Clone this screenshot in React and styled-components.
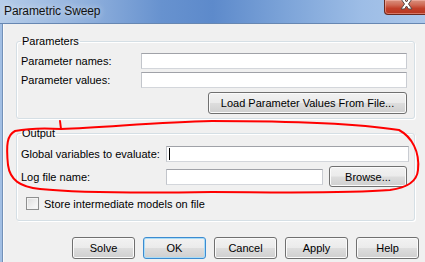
import React from "react";
import styled, { createGlobalStyle } from "styled-components";

const GlobalStyle = createGlobalStyle`
  html, body {
    margin: 0;
    padding: 0;
    background: #f0f0f0;
    overflow: hidden;
  }
  body {
    font-family: "Liberation Sans", Arial, sans-serif;
    font-size: 11px;
    color: #000;
  }
`;

const Window = styled.div`
  position: relative;
  width: 425px;
  height: 262px;
  display: flex;
  flex-direction: column;
  overflow: hidden;
`;

const TitleBar = styled.div`
  flex: none;
  height: 23px;
  display: flex;
  justify-content: space-between;
  padding-left: 4px;
  background: linear-gradient(
    90deg,
    #b6cde9 0%,
    #95b4de 18%,
    #6792cf 38%,
    #5d8acb 50%,
    #7ea5d9 68%,
    #9dbde6 85%,
    #abc7ea 100%
  );
  border-bottom: 1px solid #6787b2;
`;

const Title = styled.span`
  align-self: center;
  margin-top: -2px;
  font-size: 12px;
  letter-spacing: -0.1px;
  color: #111;
  text-shadow: 0 0 6px rgba(255, 255, 255, 0.7);
`;

const CloseButton = styled.div`
  align-self: flex-start;
  width: 44px;
  height: 15px;
  margin-right: -3px;
  display: flex;
  justify-content: center;
  align-items: flex-start;
  box-sizing: border-box;
  border: 1px solid #6b2a1e;
  border-top: none;
  border-radius: 0 0 4px 4px;
  background: linear-gradient(#d9917f 0%, #cf6a55 35%, #c2402a 60%, #b6361f 100%);
  box-shadow: inset 0 0 0 1px rgba(255, 200, 190, 0.45);
`;

const Frame = styled.div`
  flex: 1;
  display: flex;
  border-left: 2px solid #a2bfe4;
`;

const Content = styled.div`
  flex: 1;
  display: flex;
  flex-direction: column;
  background: #f0f0f0;
  border-left: 1px solid #7391b8;
  box-shadow: inset 1px 0 0 #fbfbfb;
  padding: 10px 6px 0 13px;
`;

const Group = styled.fieldset`
  margin: ${(p) => (p.$first ? "0" : "7px")} 4px 0 0;
  padding: 0 7px ${(p) => p.$bottom}px 4px;
  border: 1px solid #d5dfe5;
  border-radius: 3px;
  box-shadow: 1px 1px 0 #fff inset, 1px 1px 0 #fff;
  min-width: 0;
`;

const Legend = styled.legend`
  padding: 0 1px;
  line-height: 14px;
  font-size: 11px;
`;

const Row = styled.div`
  display: flex;
  align-items: center;
  justify-content: ${(p) => (p.$end ? "flex-end" : "flex-start")};
  height: ${(p) => p.$height || 16}px;
  margin-top: ${(p) => p.$top}px;
`;

const Label = styled.span`
  flex: none;
  width: ${(p) => p.$width}px;
  white-space: nowrap;
`;

const TextBox = styled.div`
  position: relative;
  box-sizing: border-box;
  height: 16px;
  flex: ${(p) => (p.$width ? "none" : "1")};
  width: ${(p) => (p.$width ? `${p.$width}px` : "auto")};
  margin-right: ${(p) => (p.$extend ? "-2px" : "0")};
  background: #fff;
  border: 1px solid #abadb3;
  border-color: #a0a2a8 #c9ccd2 #d3d6db #c2c5cb;
`;

const Caret = styled.span`
  position: absolute;
  left: 2px;
  top: 1px;
  width: 1px;
  height: 12px;
  background: #000;
`;

const Button = styled.button`
  box-sizing: border-box;
  flex: none;
  width: ${(p) => p.$width}px;
  height: ${(p) => p.$height || 22}px;
  margin: 0;
  margin-left: ${(p) => p.$left || 0}px;
  padding: 0;
  font-family: "Liberation Sans", Arial, sans-serif;
  font-size: 11px;
  color: #000;
  border: 1px solid ${(p) => (p.$default ? "#3c8bd0" : "#707070")};
  border-radius: 3px;
  background: linear-gradient(#f2f2f2 0%, #ebebeb 48%, #dddddd 52%, #cfcfcf 100%);
  box-shadow: inset 0 0 0 1px ${(p) => (p.$default ? "#a9dcf7" : "#fbfbfb")};
  cursor: default;
`;

const ButtonBar = styled.div`
  display: flex;
  justify-content: flex-end;
  gap: 8px;
  margin-top: 16px;
`;

const CheckRow = styled.label`
  display: flex;
  align-items: center;
  gap: 5px;
  height: 13px;
  margin: 10px 0 0 5px;
`;

const CheckBox = styled.span`
  box-sizing: border-box;
  width: 13px;
  height: 13px;
  border: 1px solid #8e8f8f;
  background: linear-gradient(135deg, #dcdcdc 0%, #f0f0f0 60%, #fcfcfc 100%);
  box-shadow: inset 0 0 0 1px #f4f4f4;
`;

const Overlay = styled.svg`
  position: absolute;
  left: 0;
  top: 0;
  pointer-events: none;
`;

const CloseGlyph = () => (
  <svg width="13" height="10" viewBox="0 0 13 10">
    <path
      d="M1 -1 L4.5 -1 L6.5 2 L8.5 -1 L12 -1 L8.5 4 L12 9 L8.5 9 L6.5 6 L4.5 9 L1 9 L4.5 4 Z"
      fill="#fff"
      stroke="#5a4a48"
      strokeWidth="1"
      strokeLinejoin="round"
    />
  </svg>
);

const buttons = [
  { name: "Solve" },
  { name: "OK", isDefault: true },
  { name: "Cancel" },
  { name: "Apply" },
  { name: "Help" },
];

export default function App() {
  return (
    <>
      <GlobalStyle />
      <Window>
        <TitleBar>
          <Title>Parametric Sweep</Title>
          <CloseButton>
            <CloseGlyph />
          </CloseButton>
        </TitleBar>
        <Frame>
          <Content>
            <Group $first $bottom={4}>
              <Legend>Parameters</Legend>
              <Row $top={5}>
                <Label $width={120}>Parameter names:</Label>
                <TextBox />
              </Row>
              <Row $top={3}>
                <Label $width={120}>Parameter values:</Label>
                <TextBox />
              </Row>
              <Row $top={4} $height={22} $end>
                <Button $width={199}>Load Parameter Values From File...</Button>
              </Row>
            </Group>

            <Group $bottom={10}>
              <Legend>Output</Legend>
              <Row $top={6}>
                <Label $width={145}>Global variables to evaluate:</Label>
                <TextBox $extend>
                  <Caret />
                </TextBox>
              </Row>
              <Row $top={4} $height={21}>
                <Label $width={145}>Log file name:</Label>
                <TextBox $width={157} />
                <Button $width={78} $height={21} $left={6}>
                  Browse...
                </Button>
              </Row>
              <CheckRow>
                <CheckBox />
                Store intermediate models on file
              </CheckRow>
            </Group>

            <ButtonBar>
              {buttons.map((b) => (
                <Button key={b.name} $width={63} $default={b.isDefault}>
                  {b.name}
                </Button>
              ))}
            </ButtonBar>
          </Content>
        </Frame>

        <Overlay width="425" height="262" viewBox="0 0 425 262">
          <path
            d="M60 121 L61 129 C110 127 160 122 212 121 C290 121 360 124 399 130 C412 137 420 152 418 170 C417 182 405 188 390 190 C340 194 260 192 212 192 C150 193 80 193 40 189 C20 187 10 180 8 165 C6 145 7 135 15 131 C30 128 45 128 61 129"
            fill="none"
            stroke="#ff0000"
            strokeWidth="2"
            strokeLinecap="round"
            strokeLinejoin="round"
          />
        </Overlay>
      </Window>
    </>
  );
}
